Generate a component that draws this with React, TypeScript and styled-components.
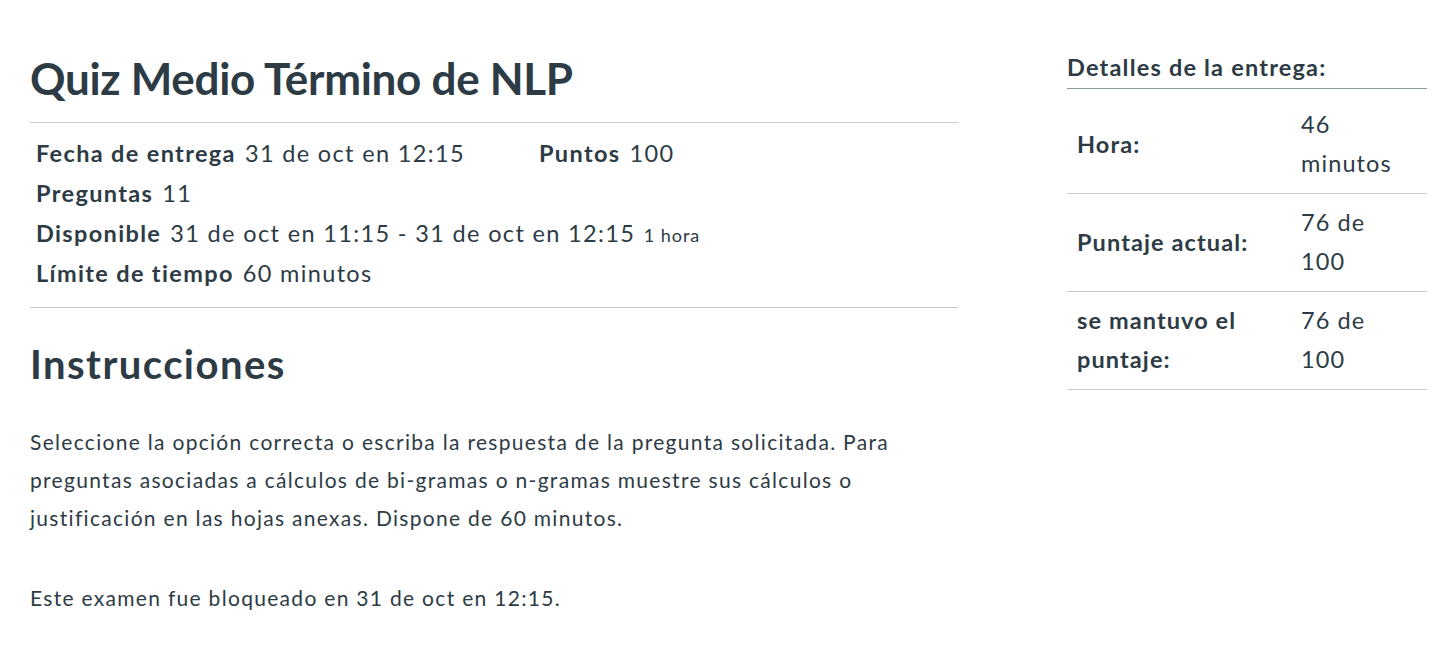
import React from "react";
import styled, { createGlobalStyle } from "styled-components";

const Global = createGlobalStyle`
  html, body { margin: 0; padding: 0; background: #ffffff; }
  body { font-family: Lato, "Noto Sans", sans-serif; color: #2d3b45; }
  * { box-sizing: border-box; }
`;

const Page = styled.div`
  display: flex;
  align-items: flex-start;
  gap: 109px;
  padding: 50px 6px 0 30px;
`;

const Main = styled.main`
  width: 928px;
  flex: none;
`;

const Title = styled.h1`
  margin: 0 0 16px;
  font-size: 44px;
  line-height: 56px;
  font-weight: 700;
  letter-spacing: -0.3px;
`;

const Rule = styled.hr`
  border: 0;
  border-top: 1px solid #c7cdd1;
  margin: 0;
`;

const Meta = styled.div`
  display: grid;
  grid-template-columns: 503px auto;
  padding: 10px 6px 14px;
`;

const MetaItem = styled.div<{ $wide?: boolean }>`
  grid-column: ${(p) => (p.$wide ? "1 / -1" : "auto")};
  font-size: 23.5px;
  line-height: 40px;
  height: 40px;
  letter-spacing: 1.35px;
  white-space: nowrap;
`;

const MetaLabel = styled.span`
  font-weight: 700;
  margin-right: 9px;
`;

const Small = styled.span`
  font-size: 18px;
  line-height: 20px;
  letter-spacing: 1px;
  margin-left: 1px;
`;

const Heading = styled.h2`
  margin: 32px 0 35px;
  font-size: 40px;
  line-height: 48px;
  font-weight: 700;
  letter-spacing: 1.45px;
`;

const Para = styled.p`
  margin: 0 0 42px;
  font-size: 21px;
  line-height: 38px;
  letter-spacing: 1.3px;
`;

const Side = styled.aside`
  width: 360px;
  flex: none;
`;

const SideTitle = styled.h3`
  margin: 0;
  padding-bottom: 4px;
  font-size: 23.5px;
  line-height: 34px;
  letter-spacing: 1.2px;
  font-weight: 700;
  border-bottom: 1px solid #8b969e;
`;

const Table = styled.table`
  width: 100%;
  border-collapse: collapse;
  font-size: 23.5px;
  line-height: 39px;
  letter-spacing: 1.1px;
`;

const Row = styled.tr<{ $first?: boolean }>`
  border-bottom: 1px solid #c7cdd1;
  & > th, & > td { padding-top: ${(p) => (p.$first ? "16px" : "9px")}; }
`;

const Th = styled.th`
  text-align: left;
  font-weight: 700;
  padding: 9px 10px 10px;
  width: 224px;
  vertical-align: middle;
`;

const Td = styled.td`
  padding: 9px 26px 10px 10px;
  font-weight: 400;
  vertical-align: middle;
`;

export default function App() {
  return (
    <>
      <Global />
      <Page>
        <Main>
          <Title>Quiz Medio Término de NLP</Title>
          <Rule />
          <Meta>
            <MetaItem>
              <MetaLabel>Fecha de entrega</MetaLabel>31 de oct en 12:15
            </MetaItem>
            <MetaItem>
              <MetaLabel>Puntos</MetaLabel>100
            </MetaItem>
            <MetaItem $wide>
              <MetaLabel>Preguntas</MetaLabel>11
            </MetaItem>
            <MetaItem $wide>
              <MetaLabel>Disponible</MetaLabel>31 de oct en 11:15 - 31 de oct en 12:15{" "}
              <Small>1 hora</Small>
            </MetaItem>
            <MetaItem $wide>
              <MetaLabel>Límite de tiempo</MetaLabel>60 minutos
            </MetaItem>
          </Meta>
          <Rule />
          <Heading>Instrucciones</Heading>
          <Para>
            Seleccione la opción correcta o escriba la respuesta de la pregunta solicitada. Para
            preguntas asociadas a cálculos de bi-gramas o n-gramas muestre sus cálculos o
            justificación en las hojas anexas. Dispone de 60 minutos.
          </Para>
          <Para>Este examen fue bloqueado en 31 de oct en 12:15.</Para>
        </Main>
        <Side>
          <SideTitle>Detalles de la entrega:</SideTitle>
          <Table>
            <tbody>
              <Row $first>
                <Th>Hora:</Th>
                <Td>46 minutos</Td>
              </Row>
              <Row>
                <Th>Puntaje actual:</Th>
                <Td>76 de 100</Td>
              </Row>
              <Row>
                <Th>se mantuvo el puntaje:</Th>
                <Td>76 de 100</Td>
              </Row>
            </tbody>
          </Table>
        </Side>
      </Page>
    </>
  );
}
